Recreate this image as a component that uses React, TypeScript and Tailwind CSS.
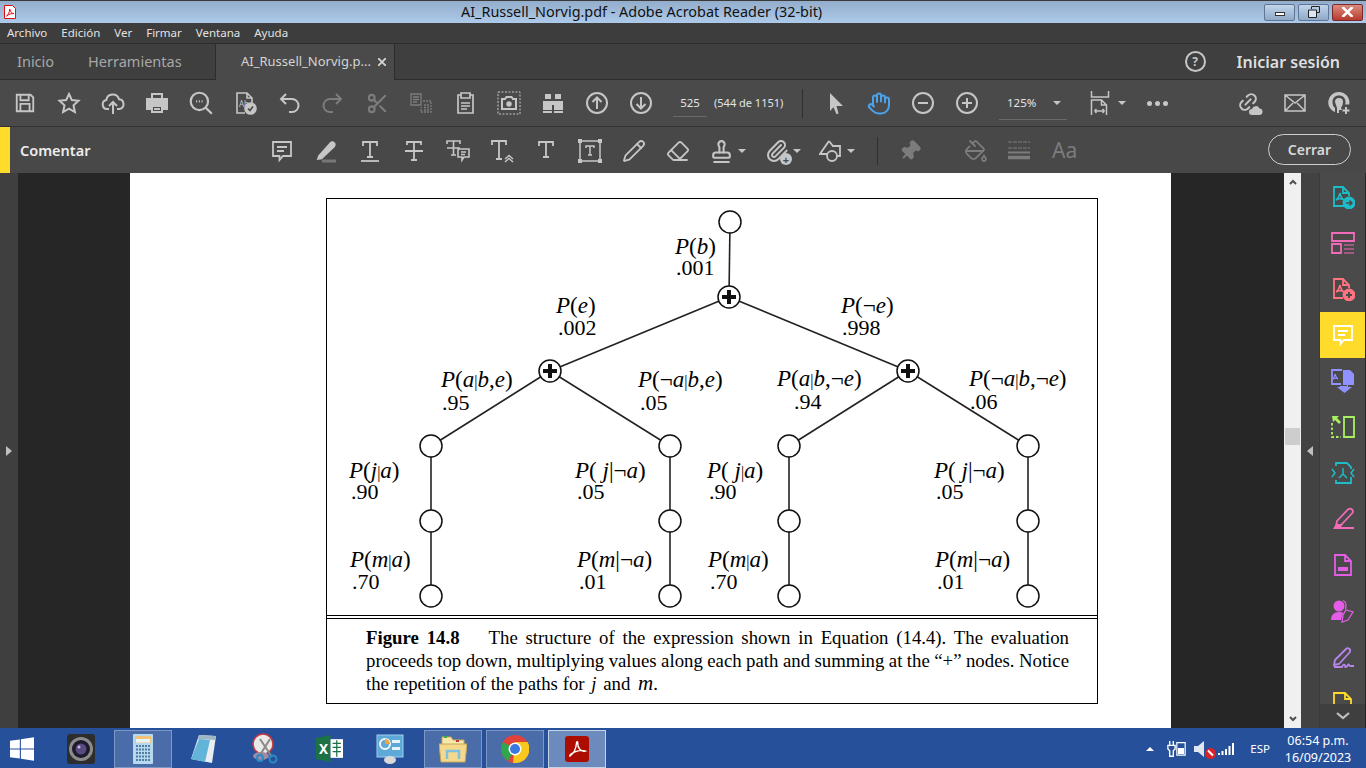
import type { ReactNode } from "react";
import { Eraser, Hand, Paperclip, PaintBucket, Pencil, Pin, Scissors, Stamp, Link2 } from "lucide-react";

const ui = { fontFamily: '"Noto Sans", sans-serif' };
const serif = { fontFamily: '"Liberation Serif", serif' };

function Ic({ children, size = 24, className = "text-[#c6c6c6]", sw = 2 }: { children: ReactNode; size?: number; className?: string; sw?: number }) {
    return (
        <svg viewBox="0 0 24 24" width={size} height={size} fill="none" stroke="currentColor" strokeWidth={sw} className={className}>
            {children}
        </svg>
    );
}

function Slot({ children, w = 44 }: { children: ReactNode; w?: number }) {
    return <div className="flex shrink-0 items-center justify-center" style={{ width: w }}>{children}</div>;
}

function Caret({ className = "border-t-[#c6c6c6]" }: { className?: string }) {
    return <span className={`ml-1 inline-block h-0 w-0 border-x-[4px] border-t-[4px] border-x-transparent ${className}`} />;
}

// acrobat swirl used on the tools panel
const Swirl = () => <path d="M9 8c.6 3 2 6 4 7M9 8c-.6 3-2 5.5-4 7M5 15c2.5-1.500 5-2 8 0" strokeWidth="1.5" />;

const PLUS_NODES = [[729, 297], [550, 371], [908, 371]];
const OPEN_NODES = [[730, 222], [431, 446], [670, 446], [789, 446], [1028, 446], [431, 521], [670, 521], [789, 521], [1028, 521], [431, 596], [670, 596], [789, 596], [1028, 596]];
const EDGES = [[730, 222, 729, 297], [729, 297, 550, 371], [729, 297, 908, 371], [550, 371, 431, 446], [550, 371, 670, 446], [908, 371, 789, 446], [908, 371, 1028, 446], [431, 446, 431, 596], [670, 446, 670, 596], [789, 446, 789, 596], [1028, 446, 1028, 596]];

const LABELS: [string, string, number, number, number, number][] = [
    ["P(b)", ".001", 675, 237, 676, 258],
    ["P(e)", ".002", 556, 296, 558, 318],
    ["P(¬e)", ".998", 841, 296, 842, 318],
    ["P(a|b,e)", ".95", 441, 370, 442, 393],
    ["P(¬a|b,e)", ".05", 638, 370, 640, 393],
    ["P(a|b,¬e)", ".94", 777, 369, 794, 392],
    ["P(¬a|b,¬e)", ".06", 969, 369, 970, 392],
    ["P(j|a)", ".90", 349, 461, 351, 482],
    ["P( j|¬a)", ".05", 575, 461, 577, 482],
    ["P( j|a)", ".90", 707, 461, 709, 482],
    ["P( j|¬a)", ".05", 934, 461, 936, 482],
    ["P(m|a)", ".70", 350, 550, 352, 572],
    ["P(m|¬a)", ".01", 577, 550, 579, 572],
    ["P(m|a)", ".70", 708, 550, 710, 572],
    ["P(m|¬a)", ".01", 935, 550, 937, 572],
];

function Formula({ text }: { text: string }) {
    return (
        <>
            {text.split(/([A-Za-z]+)/).map((part, i) =>
                /[A-Za-z]/.test(part) ? <i key={i} className="inline-block">{part}</i> : part === "|" ? <span key={i} className="inline-block text-[16px]">|</span> : <span key={i} className="inline-block">{part}</span>
            )}
        </>
    );
}

function Figure() {
    const left = 326;
    const top = 198;
    return (
        <div className="relative ml-[196px] mt-[25px] h-[506px] w-[772px] border border-black" style={serif}>
            <svg width="772" height="417" viewBox={`${left} ${top} 772 417`} className="absolute left-[-1px] top-[-1px]">
                {EDGES.map(([a, b, c, d], i) => (
                    <line key={i} x1={a} y1={b} x2={c} y2={d} stroke="#222" strokeWidth="1.6" />
                ))}
                {OPEN_NODES.map(([x, y], i) => (
                    <circle key={i} cx={x} cy={y} r="11" fill="white" stroke="#111" strokeWidth="1.5" />
                ))}
                {PLUS_NODES.map(([x, y], i) => (
                    <g key={i}>
                        <circle cx={x} cy={y} r="11" fill="white" stroke="#111" strokeWidth="1.5" />
                        <path d={`M${x - 7} ${y}h14M${x} ${y - 7}v14`} stroke="#111" strokeWidth="4" />
                    </g>
                ))}
            </svg>
            {LABELS.map(([f, v, fx, fy, vx, vy], i) => (
                <div key={i}>
                    <span className="absolute whitespace-pre text-[23px] leading-[20px] text-black" style={{ left: fx - left - 1, top: fy - top - 1 }}>
                        <Formula text={f} />
                    </span>
                    <span className="absolute text-[22px] leading-[20px] text-black" style={{ left: vx - left - 1, top: vy - top - 1 }}>{v}</span>
                </div>
            ))}
            <div className="absolute inset-x-0 top-[416px] h-[4px] border-y border-black" />
            <div className="absolute inset-x-0 top-[427px] pl-[39px] pr-[28px] text-[18.8px] leading-[23px] text-black">
                <p className="[text-align-last:justify]">
                    <b>Figure 14.8</b><span className="ml-[29px]">The structure of the expression shown in Equation (14.4). The evaluation</span>
                </p>
                <p className="whitespace-nowrap [word-spacing:-0.3px] [text-align-last:justify]">proceeds top down, multiplying values along each path and summing at the “+” nodes. Notice</p>
                <p>the repetition of the paths for <i className="mx-[2px]">j</i> and <i className="ml-[3px] text-[21px]">m</i>.</p>
            </div>
        </div>
    );
}

function MainToolbar() {
    const dim = "text-[#7c7c7c]";
    return (
        <div className="flex h-[47px] shrink-0 items-center border-b border-[#333] bg-[#4a4a4a] pl-[3px]">
            <Slot><Ic size={22}><path d="M3 3h15l3 3v15H3zM7 3v6h9V3M7 21v-8h10v8" /></Ic></Slot>
            <Slot><Ic><path d="M12 3l2.8 6 6.7.8-5 4.5 1.4 6.7-5.900-3.400-5.900 3.400 1.400-6.700-5-4.500 6.700-.8z" /></Ic></Slot>
            <Slot><Ic><path d="M8 18H6a4.5 4.5 0 0 1-.7-8.900A6.500 6.500 0 0 1 18 8.300 4.900 4.900 0 0 1 18.500 18H16M12 23V11M8 15l4-4 4 4" /></Ic></Slot>
            <Slot><Ic><path d="M7 8V3h10v5" /><path d="M2 8h20v10h-4v-4H6v4H2z" fill="currentColor" /><path d="M7 15h10v6H7zM9 18h6" /></Ic></Slot>
            <Slot><Ic size={26}><circle cx="10.5" cy="10.5" r="8" /><path d="M16.500 16.500 22 22" /><path d="M7.500 10.500h1M10 10.500h1M12.500 10.500h1" /></Ic></Slot>
            <Slot>
                <Ic sw={1.6}>
                    <path d="M12 22H4V2h10l5 5v5M14 2v5h5" />
                    <text x="6" y="16" fontSize="8" fill="currentColor" stroke="none" style={ui}>Ab</text>
                    <circle cx="17.5" cy="17.5" r="5.5" fill="currentColor" />
                    <path d="M15 17.500l2 2 3-4" stroke="#4a4a4a" />
                </Ic>
            </Slot>
            <Slot><Ic><path d="M9 3 4 8l5 5M4 8h11a6.500 6.500 0 0 1 0 13h-3" /></Ic></Slot>
            <Slot><Ic className={dim}><path d="M15 3l5 5-5 5M20 8H9a6.500 6.500 0 0 0 0 13h3" /></Ic></Slot>
            <Slot><Scissors size={23} className={dim} strokeWidth={2.2} /></Slot>
            <Slot>
                <Ic className={dim} sw={1.3}>
                    <path d="M2 3h10v11H2zM4 6h6M4 8.500h6M4 11h4" />
                    <path d="M14 10h8v11H12v-5M15 14h5M15 16.500h5M15 19h5" strokeDasharray="2 1" />
                </Ic>
            </Slot>
            <Slot><Ic sw={1.7}><path d="M8 4H5v18h15V4h-3M8 2h9v5H8zM8 12h9M8 15h9M8 18h6" /></Ic></Slot>
            <Slot>
                <Ic sw={1.5}>
                    <rect x="1" y="1" width="22" height="22" strokeDasharray="2 1.5" strokeWidth="1" />
                    <path d="M5 8h3l1.500-2h5L16 8h3v10H5z" strokeWidth="2" />
                    <circle cx="12" cy="13" r="2" fill="currentColor" />
                </Ic>
            </Slot>
            <Slot>
                <Ic sw={0}>
                    <path d="M4 3h6v5H4zM14 3h6v5h-6zM2 10h9v9H2zM13 10h9v9h-9zM10 10h4v4h-4zM2 20h9v2H2zM13 20h9v2h-9z" fill="currentColor" />
                </Ic>
            </Slot>
            <Slot><Ic><circle cx="12" cy="12" r="10" /><path d="M12 18V7M7.500 11 12 6.500l4.500 4.500" /></Ic></Slot>
            <Slot><Ic><circle cx="12" cy="12" r="10" /><path d="M12 6v11M7.500 13l4.500 4.500 4.500-4.500" /></Ic></Slot>
            <div className="ml-[10px] w-[34px] border-b border-[#6a6a6a] pb-[5px] pt-[5px] text-center text-[11.5px] text-[#e4e4e4]" style={ui}>525</div>
            <span className="ml-[7px] w-[68px] whitespace-nowrap text-[11px] text-[#e4e4e4]" style={ui}>(544 de 1151)</span>
            <div className="ml-[20px] h-[29px] w-px bg-[#2f2f2f]" />
            <div className="ml-[21px]"><Slot w={24}><Ic sw={0}><path d="M6 2l13 13h-6.500l2 7.500-2 .8-3-7L6 20z" fill="currentColor" /></Ic></Slot></div>
            <div className="ml-[19px]"><Slot w={24}><Hand size={25} className="text-[#4aa3ea]" strokeWidth={2} /></Slot></div>
            <div className="ml-[20px]"><Slot w={24}><Ic><circle cx="12" cy="12" r="10" /><path d="M7 12h10" /></Ic></Slot></div>
            <div className="ml-[20px]"><Slot w={24}><Ic><circle cx="12" cy="12" r="10" /><path d="M7 12h10M12 7v10" /></Ic></Slot></div>
            <div className="ml-[20px] flex h-[33px] w-[68px] items-center justify-between border-b border-[#6a6a6a] pl-[8px] pr-[6px] text-[11.5px] text-[#e4e4e4]" style={ui}>
                125%<Caret />
            </div>
            <div className="ml-[23px] flex items-center">
                <Ic sw={1.5}><path d="M1.500 0v6h17V0M1.500 24V9h10l5 5v10M11.500 9v5h5M4.500 20h10M4.500 20l2-2M4.500 20l2 2M14.500 20l-2-2M14.500 20l-2 2" /></Ic>
                <Caret />
            </div>
            <div className="ml-[21px] flex gap-[3px]">
                <span className="h-[5px] w-[5px] rounded-full bg-[#c6c6c6]" />
                <span className="h-[5px] w-[5px] rounded-full bg-[#c6c6c6]" />
                <span className="h-[5px] w-[5px] rounded-full bg-[#c6c6c6]" />
            </div>
            <div className="relative ml-[69px] h-[24px] w-[24px]">
                <Link2 size={22} className="-rotate-45 text-[#c6c6c6]" strokeWidth={2.2} />
                <svg viewBox="0 0 14 9" width="14" height="9" className="absolute bottom-0 right-[-2px] text-[#c6c6c6]">
                    <path d="M3 9a3 3 0 0 1 0-6 4 4 0 0 1 7.500-.5A3.300 3.300 0 0 1 11 9z" fill="currentColor" />
                </svg>
            </div>
            <div className="ml-[22px]">
                <Ic sw={1.5}><path d="M2 4h20v16H2zM2 4l10 8 10-8M2 20l8-8M22 20l-8-8" /></Ic>
            </div>
            <div className="ml-[20px]">
                <Ic sw={0}>
                    <path d="M12 1a10.500 10.500 0 0 0-4 20.300V17c-1.500-1-2.500-3-2.500-6 0-4 2.500-6.500 6.500-6.500s6.500 2.500 6.500 6.500c0 1-.1 1.600-.3 2.500h4A10.500 10.500 0 0 0 12 1z" fill="currentColor" />
                    <path d="M8 11a4 4 0 0 1 8 0c0 3-1.500 5-2 6l1 2h-3v3h-2v-5z" fill="currentColor" />
                    <path d="M19 16v7M15.500 19.500h7" stroke="currentColor" strokeWidth="2" />
                </Ic>
            </div>
        </div>
    );
}

function CommentBar() {
    const dim = "text-[#7c7c7c]";
    const serifT = <path d="M5 7V3h14v4M12 3v15M9 18h6" />;
    return (
        <div className="relative flex h-[46px] shrink-0 items-center bg-[#484848] pt-[2px]">
            <div className="-mt-[2px] h-[46px] w-[10px] bg-[#ffdc2b]" />
            <span className="ml-[10px] w-[240px] text-[14.5px] font-semibold text-[#ececec]" style={ui}>Comentar</span>
            <Slot><Ic sw={1.8}><path d="M3 3h18v14h-8l-3.500 4v-4H3zM7 8h10M7 12h7" /></Ic></Slot>
            <Slot>
                <Ic sw={1.8}>
                    <path d="M5 17l-1 3 3.500-.5L20 7.500c1-1 1-2.500 0-3.500s-2.500-1-3.500 0z" fill="currentColor" />
                    <path d="M8 22h14" stroke="#777" strokeWidth="3" />
                </Ic>
            </Slot>
            <Slot><Ic sw={1.8}>{serifT}<path d="M3 22h18" /></Ic></Slot>
            <Slot><Ic sw={1.8}><path d="M5 6V3h14v3M12 3v18M9 21h6M3 12h18" /></Ic></Slot>
            <Slot>
                <Ic sw={1.6}>
                    <path d="M1 5V2h13v3M7.500 2v14M5 16h5M1 9h13" />
                    <path d="M12 10h11v8h-5l-2 3v-3h-4zM15 13h5M15 15.500h4" />
                </Ic>
            </Slot>
            <Slot><Ic sw={1.8}><path d="M2 6V2h14v4M9 2v18M6 20h6" /><path d="M15 20l4-3.500 4 3.500M15 23l4-3.500 4 3.500" strokeWidth="1.4" /></Ic></Slot>
            <Slot><Ic sw={1.8}>{serifT}</Ic></Slot>
            <Slot>
                <Ic sw={1.5}>
                    <path d="M2 2h20v20H2z" />
                    <path d="M8 9V7h8v2M12 7v9M10 16h4" />
                    <path d="M0 0h4v4H0zM20 0h4v4h-4zM0 20h4v4H0zM20 20h4v4h-4z" fill="currentColor" stroke="none" />
                </Ic>
            </Slot>
            <Slot><Pencil size={24} className="text-[#c6c6c6]" strokeWidth={1.8} /></Slot>
            <Slot><Eraser size={24} className="text-[#c6c6c6]" strokeWidth={1.8} /></Slot>
            <div className="ml-[9px] flex w-[44px] items-center"><Stamp size={25} className="text-[#c6c6c6]" strokeWidth={2} /><Caret /></div>
            <div className="ml-[12px] flex w-[44px] items-center">
                <div className="relative">
                    <Paperclip size={24} className="text-[#c6c6c6]" strokeWidth={2} />
                    <span className="absolute bottom-[-2px] right-[-3px] flex h-[12px] w-[12px] items-center justify-center rounded-full bg-[#c6c6c6] text-[11px] font-bold leading-none text-[#484848]">+</span>
                </div>
                <Caret />
            </div>
            <div className="ml-[10px] flex w-[58px] items-center">
                <Ic sw={1.8}><path d="M10 2 1 15h8M10 2l4 5h7v10h-4" /><circle cx="13" cy="17" r="5" /></Ic>
                <Caret />
            </div>
            <div className="h-[28px] w-px bg-[#2f2f2f]" />
            <div className="ml-[20px]"><Slot w={24}><Pin size={22} className={`${dim} rotate-45`} fill="currentColor" /></Slot></div>
            <div className="ml-[42px]"><Slot w={24}><PaintBucket size={24} className={dim} strokeWidth={1.8} /></Slot></div>
            <div className="ml-[19px]">
                <Ic className={dim} sw={2}><path d="M1 3h22" strokeDasharray="4 1" strokeWidth="1" /><path d="M1 9h22" strokeDasharray="4 1" strokeWidth="1" /><path d="M1 13.500h22" /><path d="M1 18.500h22" strokeWidth="3.5" /></Ic>
            </div>
            <span className="ml-[21px] text-[21px] text-[#7c7c7c]" style={ui}>Aa</span>
            <button className="absolute left-[1268px] top-[7px] h-[31px] w-[83px] rounded-full border border-[#cfcfcf] text-[14px] font-semibold text-[#d8d8d8]" style={ui}>Cerrar</button>
        </div>
    );
}

function RightPanel() {
    const tools: [string, ReactNode][] = [
        ["text-[#1cbcc8]", <><path d="M13 21H3V2h9l6 6v3M12 2v6h6" /><Swirl /><circle cx="18" cy="18" r="5.5" fill="currentColor" /><path d="M15 18h6M18.500 15.500 21 18l-2.500 2.500" stroke="#4a4a4a" strokeWidth="1.5" /></>],
        ["text-[#f26bb8]", <><path d="M1 2h22v8H1zM1 13h9v9H1z" /><path d="M13 14h10M13 18h10M13 22h10" strokeWidth="1.2" /></>],
        ["text-[#ff7480]", <><path d="M12 21H3V2h9l6 6v3M12 2v6h6" /><Swirl /><circle cx="18" cy="18" r="5.5" fill="currentColor" /><path d="M15 18h6M18 15v6" stroke="#4a4a4a" strokeWidth="2" /></>],
        ["text-white", <path d="M3 3h18v14h-8l-3.500 4v-4H3zM7 8h10M7 12h7" />],
        ["text-[#9191ff]", <><path d="M10 15H1V1h10" /><path d="M4 5c.5 2 1.500 4 3 5M4 5c-.4 2-1 3.500-2 5M2 10c2-1 4-1 5 0" strokeWidth="1.2" /><path d="M12 1h7l4 4v11H12z" fill="currentColor" stroke="none" /><path d="M9 17h7v-1h1v2h4l-7.500 6L6 18h3z" fill="currentColor" stroke="none" /></>],
        ["text-[#a8f060]", <><path d="M13 2h10v20H13z" /><path d="M1 8v14h9" strokeDasharray="2.5 2" /><path d="M1 1h7L6 3l4 4-2 2-4-4-2 2z" fill="currentColor" stroke="none" /></>],
        ["text-[#1cbcc8]", <><path d="M5 5V2h11l4 4v2M20 16v6H5v-3" /><path d="M1 8l3 4-3 4M23 8l-3 4 3 4" strokeWidth="1.5" /><path d="M12 7v6M12 13l-4 4M12 13l4 4" strokeWidth="1.5" /></>],
        ["text-[#f26bb8]", <><path d="M6 14 17 2.500c1.200-1 3-1 4 0s1 2.800 0 4L10 18l-5 1z" /><path d="M2 22l3-5h7l-2 3h13v2z" fill="currentColor" stroke="none" /></>],
        ["text-[#e45de6]", <><path d="M4 2h10l6 6v14H4zM14 2v6h6" /><path d="M7 14h10v4H7z" fill="currentColor" stroke="none" /></>],
        ["text-[#e45de6]", <><circle cx="8" cy="7" r="5.5" fill="currentColor" stroke="none" /><path d="M0 21c0-5 3-8 8-8 2 0 4 .5 4 .5L10 21z" fill="currentColor" stroke="none" /><path d="M12 1.500c3 1 3.500 5 2.500 9M15 11l7 2-5 8-6 2 1-7z" strokeWidth="1.3" /></>],
        ["text-[#b785ea]", <><path d="M3 20l1-5L15 4c1-1 2.500-1 3.500 0s1 2.500 0 3.500L8 19zM3 22h8c1-3 3-3 3-1s2 1 3-1 1 2 3 1h3" strokeWidth="1.8" /></>],
    ];
    return (
        <div className="relative flex w-[46px] shrink-0 flex-col items-center overflow-hidden border-l border-[#3a3a3a] bg-[#4a4a4a] pt-[1px]">
            {tools.map(([color, path], i) => (
                <div key={i} className={`flex h-[46px] w-[46px] shrink-0 items-center justify-center ${i === 3 ? "bg-[#ffdc2b]" : ""}`}>
                    <Ic className={color} sw={1.8}>{path}</Ic>
                </div>
            ))}
            <div className="flex h-[46px] w-[46px] shrink-0 justify-center pt-[11px]">
                <Ic className="text-[#ffdc2b]" sw={1.8}><path d="M3 22V2h11l6 6v6M14 2v6h6" /></Ic>
            </div>
            <div className="absolute inset-x-0 bottom-0 flex h-[24px] items-center justify-center bg-[#3f3f3f]">
                <svg viewBox="0 0 14 8" width="14" height="8" fill="none" stroke="#c0c0c0" strokeWidth="2.2"><path d="M1 1l6 5 6-5" /></svg>
            </div>
        </div>
    );
}

function Taskbar() {
    const box = "flex h-[38px] w-[58px] items-center justify-center border border-[#7d97c6] bg-[#4a6ca8]";
    return (
        <div className="flex h-[40px] shrink-0 items-center bg-[#27509b] pt-[1px]" style={ui}>
            <div className="flex w-[44px] justify-center">
                <svg viewBox="0 0 22 22" width="24" height="24" fill="white"><path d="M0 3.500 9 2.200V10.500H0zM10 2 22 .3V10.500H10zM0 11.500h9V19.800L0 18.500zM10 11.500h12V21.700L10 20z" /></svg>
            </div>
            <div className="ml-[10px] flex w-[54px] justify-center">
                <svg viewBox="0 0 28 30" width="28" height="30">
                    <rect x="0" y="0" width="28" height="30" rx="3" fill="#2d2d2d" />
                    <circle cx="14" cy="15" r="12" fill="#8c8c8c" />
                    <circle cx="14" cy="15" r="9" fill="#1d1a2c" />
                    <circle cx="14" cy="15" r="5.5" fill="#5a4a80" />
                    <circle cx="12" cy="13" r="1.5" fill="#c6bce6" />
                </svg>
            </div>
            <div className={`ml-[6px] ${box}`}>
                <svg viewBox="0 0 20 30" width="20" height="30">
                    <rect width="20" height="30" rx="1" fill="#b8d8ee" />
                    <rect x="2" y="2" width="16" height="7" fill="#f2c27a" />
                    <rect x="3" y="5" width="14" height="3.5" fill="#e8f4fb" />
                    <path d="M3 12h14M3 15.500h14M3 19h14M3 22.500h14M3 26h14" stroke="#4c7ea6" strokeWidth="2" strokeDasharray="2 1" />
                </svg>
            </div>
            <div className="ml-[16px] flex w-[32px] justify-center">
                <svg viewBox="0 0 26 32" width="26" height="32">
                    <path d="M8 2 25 3 21 30 0 26z" fill="#e8eef2" />
                    <path d="M8 2 25 3 24 7 7 6z" fill="#9fb6c4" />
                    <path d="M8 6 0 26 14 29 19 7z" fill="#62b4d8" />
                </svg>
            </div>
            <div className="ml-[29px] flex w-[32px] justify-center">
                <svg viewBox="0 0 26 32" width="26" height="32" fill="none">
                    <ellipse cx="11" cy="11" rx="10" ry="10" fill="#eceae8" stroke="#c8363f" strokeWidth="1.5" />
                    <ellipse cx="9" cy="23" rx="8" ry="4" fill="#9c8ca6" />
                    <path d="M8 6 20 24M18 6 8 22" stroke="#8a8a8a" strokeWidth="2" />
                    <circle cx="21" cy="26" r="3.5" stroke="#2b8ac6" strokeWidth="2" />
                    <circle cx="8" cy="25" r="3" stroke="#2b8ac6" strokeWidth="2" />
                </svg>
            </div>
            <div className="ml-[32px] flex w-[32px] justify-center">
                <svg viewBox="0 0 26 26" width="27" height="27">
                    <path d="M0 3 14 0v26L0 23z" fill="#1d7245" />
                    <rect x="14" y="4" width="12" height="18" fill="#fff" />
                    <path d="M16 8h8M16 12h8M16 16h8M20 5v16" stroke="#1d7245" strokeWidth="1.2" />
                    <text x="3" y="18" fontSize="13" fontWeight="700" fill="white" style={ui}>X</text>
                </svg>
            </div>
            <div className="ml-[29px] flex w-[32px] justify-center">
                <svg viewBox="0 0 28 30" width="28" height="30">
                    <rect width="26" height="22" x="1" y="1" fill="#5fa9d8" stroke="#9fd0ee" />
                    <circle cx="9" cy="10" r="5" fill="none" stroke="#f0f6fa" strokeWidth="2" />
                    <path d="M9 5a5 5 0 0 1 5 5H9z" fill="#f0a43c" />
                    <rect x="16" y="6" width="8" height="3" fill="#e8f4fb" />
                    <rect x="16" y="13" width="8" height="3" fill="#e8f4fb" />
                    <ellipse cx="14" cy="26" rx="6" ry="4" fill="#d8d8d8" />
                </svg>
            </div>
            <div className={`ml-[18px] ${box}`}>
                <svg viewBox="0 0 28 28" width="28" height="28">
                    <path d="M3 6V2h9l2 3h11v5H3z" fill="#f8e9a8" stroke="#c8a858" />
                    <rect x="5" y="1" width="3" height="2" fill="#3fa84c" />
                    <rect x="17" y="5" width="3" height="2" fill="#c8363f" />
                    <path d="M0 9h28l-2 18H2z" fill="#f4d98c" stroke="#c8a858" />
                    <path d="M8 24v-8h12v8" fill="none" stroke="#7ec0e0" strokeWidth="2.5" />
                </svg>
            </div>
            <div className={`ml-[4px] ${box}`}>
                <svg viewBox="0 0 28 28" width="28" height="28">
                    <circle cx="14" cy="14" r="14" fill="#e2423a" />
                    <path d="M14 14 7 26.100A14 14 0 0 1 2 7z" fill="#30a64f" />
                    <path d="M14 7H26.500A14 14 0 0 1 14 28H12z" fill="#f9c81c" />
                    <circle cx="14" cy="14" r="6.5" fill="#fff" />
                    <circle cx="14" cy="14" r="5" fill="#3b78e0" />
                </svg>
            </div>
            <div className="ml-[4px] flex h-[38px] w-[58px] items-center justify-center border border-[#c6d2e6] bg-[#6d8abc]">
                <svg viewBox="0 0 24 26" width="24" height="26">
                    <rect width="24" height="26" rx="3" fill="#ad0c00" />
                    <path d="M5 20c3-2 6-7 6.500-13 .2-2 1.500-1.500 1.300.5C12.500 12 16 16 20 15c-4-1.500-10 0-14 3-1.500 1.200-1.500 2.500-1 2z" fill="none" stroke="#fff" strokeWidth="1.4" />
                </svg>
            </div>
            <div className="ml-auto flex items-center text-white">
                <span className="h-0 w-0 border-x-[4px] border-b-[4px] border-x-transparent border-b-white" />
                <svg viewBox="0 0 10 20" width="9" height="18" className="ml-[13px]" fill="none" stroke="white" strokeWidth="1.5">
                    <path d="M3 1v5M7 1v5M1 6h8v4l-2 2v6H3v-6l-2-2z" />
                </svg>
                <svg viewBox="0 0 12 18" width="10" height="15" fill="none" stroke="white" strokeWidth="1.4"><path d="M1 2h10v15H1z" /><path d="M3 9h6v6H3z" fill="white" /></svg>
                <div className="relative ml-[8px] h-[18px] w-[20px]">
                    <svg viewBox="0 0 12 18" width="12" height="18" fill="#dfe6f0"><path d="M0 6h4l6-5v16l-6-5H0z" /></svg>
                    <span className="absolute bottom-[-1px] right-[-2px] flex h-[11px] w-[11px] items-center justify-center rounded-full bg-[#d8232a]">
                        <span className="block h-[2px] w-[7px] rotate-45 bg-white" />
                    </span>
                </div>
                <svg viewBox="0 0 16 12" width="16" height="12" className="ml-[4px]" fill="white"><path d="M0 10h2v2H0zM3.500 8h2v4h-2zM7 6h2v6H7zM10.500 3h2v9h-2zM14 0h2v12h-2z" /></svg>
                <span className="ml-[16px] text-[11.5px]">ESP</span>
                <div className="ml-[16px] mr-[16px] flex w-[64px] flex-col items-center whitespace-nowrap text-[12.5px] leading-[17px]">
                    <span>06:54 p.m.</span>
                    <span>16/09/2023</span>
                </div>
            </div>
        </div>
    );
}

export default function App() {
    return (
        <div className="flex h-[768px] w-[1366px] flex-col overflow-hidden bg-[#262626]">
            {/* Title bar */}
            <div className="relative flex h-[23px] shrink-0 items-center border-t border-[#3a3a3a] bg-gradient-to-b from-[#93adcb] to-[#aecaea]" style={ui}>
                <svg viewBox="0 0 12 14" width="12" height="14" className="ml-[4px]">
                    <path d="M.5 .5h8l3 3v10H.5z" fill="white" stroke="#e01010" />
                    <path d="M2.500 11c2-1 3-4 3.200-7 1 3 2 4.500 4 4.500-2.500 0-5 .7-7.200 2.500z" fill="none" stroke="#e01010" strokeWidth="1" />
                </svg>
                <span className="ml-[445px] whitespace-nowrap text-[14.4px] text-[#111]">AI_Russell_Norvig.pdf - Adobe Acrobat Reader (32-bit)</span>
                <div className="ml-auto mr-[3px] flex gap-[3px]">
                    <div className="flex h-[17px] w-[31px] items-center justify-center rounded-[2px] border border-[#5f7794] bg-gradient-to-b from-[#c2d5ea] to-[#8fa9c8]">
                        <span className="mt-[3px] h-[4px] w-[10px] border border-[#333] bg-white" />
                    </div>
                    <div className="flex h-[17px] w-[31px] items-center justify-center rounded-[2px] border border-[#5f7794] bg-gradient-to-b from-[#c2d5ea] to-[#8fa9c8]">
                        <svg viewBox="0 0 12 12" width="12" height="12" fill="none" stroke="#222"><path d="M3.500 3V.5h8v6H8.500" /><path d="M.5 4h8v7.500h-8z" fill="#dce6f2" /></svg>
                    </div>
                    <div className="flex h-[17px] w-[31px] items-center justify-center rounded-[2px] border border-[#7a2a2a] bg-gradient-to-b from-[#dc8a7e] to-[#b63a2e]">
                        <svg viewBox="0 0 12 10" width="13" height="10" stroke="white" strokeWidth="2.5"><path d="M1 0l10 10M11 0 1 10" /></svg>
                    </div>
                </div>
            </div>

            {/* Menu */}
            <div className="flex h-[21px] shrink-0 items-center gap-[14px] border-b border-[#2c2c2c] bg-[#3d3d3d] pl-[7px] text-[11.5px] text-[#e2e2e2]" style={ui}>
                <span>Archivo</span>
                <span>Edición</span>
                <span>Ver</span>
                <span>Firmar</span>
                <span>Ventana</span>
                <span>Ayuda</span>
            </div>

            {/* Tabs */}
            <div className="flex h-[36px] shrink-0 items-stretch bg-[#3f3f3f] text-[14.5px]" style={ui}>
                <div className="flex w-[215px] items-center gap-[34px] border-b border-[#2c2c2c] pl-[17px] text-[#a8a8a8]">
                    <span>Inicio</span>
                    <span>Herramientas</span>
                </div>
                <div className="flex w-[180px] items-center justify-between border-x border-[#2c2c2c] bg-[#4a4a4a] pl-[25px] pr-[8px] text-[13px] text-[#d4d4d4]">
                    <span className="whitespace-nowrap">AI_Russell_Norvig.p...</span>
                    <svg viewBox="0 0 8 8" width="8" height="8" stroke="#d4d4d4" strokeWidth="1.8"><path d="M0 0l8 8M8 0 0 8" /></svg>
                </div>
                <div className="flex flex-1 items-center justify-end border-b border-[#2c2c2c] pr-[26px]">
                    <div className="mr-[31px] flex h-[21px] w-[21px] items-center justify-center rounded-full border-2 border-[#c6c6c6] text-[12px] font-bold text-[#c6c6c6]">?</div>
                    <span className="text-[16px] font-semibold text-[#dedede]">Iniciar sesión</span>
                </div>
            </div>

            <MainToolbar />
            <CommentBar />

            {/* Document area */}
            <div className="flex min-h-0 flex-1">
                <div className="flex w-[18px] shrink-0 items-center justify-center bg-[#3f3f3f]">
                    <span className="h-0 w-0 border-y-[5px] border-l-[6px] border-y-transparent border-l-[#c0c0c0]" />
                </div>
                <div className="w-[112px] shrink-0 bg-[#262626]" />
                <div className="w-[1041px] shrink-0 bg-white">
                    <Figure />
                </div>
                <div className="w-[113px] shrink-0 bg-[#262626]" />
                <div className="flex w-[17px] shrink-0 flex-col items-center bg-[#f0f0f0] py-[6px]">
                    <svg viewBox="0 0 8 6" width="8" height="6" fill="none" stroke="#505050" strokeWidth="2"><path d="M1 5l3-3 3 3" /></svg>
                    <div className="mt-[243px] h-[17px] w-[15px] bg-[#cdcdcd]" />
                    <svg viewBox="0 0 8 6" width="8" height="6" fill="none" stroke="#505050" strokeWidth="2" className="mt-auto"><path d="M1 1l3 3 3-3" /></svg>
                </div>
                <div className="flex w-[18px] shrink-0 items-center justify-center bg-[#424242]">
                    <span className="h-0 w-0 border-y-[5px] border-r-[6px] border-y-transparent border-r-[#c0c0c0]" />
                </div>
                <RightPanel />
            </div>

            <Taskbar />
        </div>
    );
}
